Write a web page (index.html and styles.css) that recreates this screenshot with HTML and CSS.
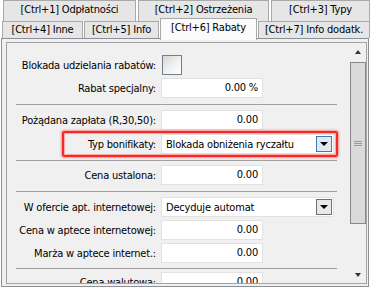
FILE: index.html
```html
<!DOCTYPE html>
<html lang="pl">
<head>
<meta charset="utf-8">
<title>Rabaty</title>
<link rel="stylesheet" href="styles.css">
</head>
<body>
<div class="tabctl">
  <div class="tabrow back">
    <div class="tab t1">[Ctrl+1] Odpłatności</div>
    <div class="tab t2">[Ctrl+2] Ostrzeżenia</div>
    <div class="tab t3">[Ctrl+3] Typy</div>
  </div>
  <div class="tabrow front">
    <div class="tab t4">[Ctrl+4] Inne</div>
    <div class="tab t5">[Ctrl+5] Info</div>
    <div class="tab t6 active">[Ctrl+6] Rabaty</div>
    <div class="tab t7">[Ctrl+7] Info dodatk.</div>
  </div>
  <div class="page">
    <div class="scrollbox">
      <div class="form">
        <div class="row">
          <div class="lbl">Blokada udzielania rabatów:</div>
          <div class="check"></div>
        </div>
        <div class="row">
          <div class="lbl">Rabat specjalny:</div>
          <div class="inp">0.00 %</div>
        </div>
        <div class="sep s1"></div>
        <div class="row">
          <div class="lbl">Pożądana zapłata (R,30,50):</div>
          <div class="inp">0.00</div>
        </div>
        <div class="row hl">
          <div class="lbl">Typ bonifikaty:</div>
          <div class="sel">
            <span class="seltext">Blokada obniżenia ryczałtu</span>
            <span class="dd focus"><span class="tri-down"></span></span>
          </div>
        </div>
        <div class="sep s2"></div>
        <div class="row">
          <div class="lbl">Cena ustalona:</div>
          <div class="inp">0.00</div>
        </div>
        <div class="sep s3"></div>
        <div class="row">
          <div class="lbl">W ofercie apt. internetowej:</div>
          <div class="sel">
            <span class="seltext">Decyduje automat</span>
            <span class="dd"><span class="tri-down"></span></span>
          </div>
        </div>
        <div class="row">
          <div class="lbl">Cena w aptece internetowej:</div>
          <div class="inp">0.00</div>
        </div>
        <div class="row">
          <div class="lbl">Marża w aptece internet.:</div>
          <div class="inp">0.00</div>
        </div>
        <div class="sep s4"></div>
        <div class="row">
          <div class="lbl">Cena walutowa:</div>
          <div class="inp">0.00</div>
        </div>
      </div>
      <div class="vscroll">
        <div class="sbtn"><span class="tri-up small"></span></div>
        <div class="track">
          <div class="thumb"><span class="grip"></span></div>
        </div>
        <div class="sbtn"><span class="tri-down small"></span></div>
      </div>
    </div>
  </div>
</div>
</body>
</html>
```

FILE: styles.css
```css
* { box-sizing: border-box; }

body {
  margin: 0;
  background: #ffffff;
  font-family: "DejaVu Sans Condensed", "DejaVu Sans", sans-serif;
  font-stretch: condensed;
  font-size: 11px;
  letter-spacing: -0.2px;
  color: #000;
}

.tabctl {
  width: 371px;
  height: 289px;
  overflow: hidden;
}

.tabrow {
  display: flex;
  align-items: flex-end;
}

.tab {
  border: 1px solid #a9a9a9;
  border-bottom: none;
  background: #e6e6e6;
  text-align: center;
  white-space: nowrap;
}

.back {
  height: 21px;
  padding-left: 3px;
}
.back .tab {
  height: 21px;
  line-height: 18px;
}
.t1 { width: 133px; }
.t2 { width: 131px; margin-left: 2px; }
.t3 { width: 99px; margin-left: 2px; }

.front {
  height: 17px;
  padding-left: 2px;
}
.front .tab {
  height: 17px;
  line-height: 16px;
}
.t4 { width: 81px; }
.t5 { width: 75px; margin-left: 1px; }
.t6 { width: 97px; margin-left: 1px; }
.t7 { width: 112px; margin-left: 1px; }

.front .tab.active {
  height: 22px;
  margin-top: -3px;
  margin-bottom: -2px;
  background: #fbfbfb;
  position: relative;
  z-index: 2;
  line-height: 18px;
}

.page {
  margin-left: 1px;
  width: 368px;
  height: 249px;
  border: 1px solid #8c8f96;
  background: #f0f0f0;
  padding: 3px 1px 2px 4px;
}

.scrollbox {
  height: 100%;
  border: 1px solid #a3a3a3;
  background: #f0f0f0;
  display: flex;
  overflow: hidden;
}

.form {
  width: 342px;
  flex: none;
  display: flex;
  flex-direction: column;
  gap: 3px;
  padding-top: 12px;
}

.row {
  display: flex;
  align-items: center;
  height: 20px;
  flex: none;
  gap: 5px;
  position: relative;
}

.lbl {
  width: 149px;
  text-align: right;
  white-space: nowrap;
}

.check {
  width: 20px;
  height: 20px;
  margin-left: 1px;
  border: 1px solid #6e7f91;
  background: linear-gradient(135deg, #d6d6d6 0%, #f4f4f4 60%, #ffffff 100%);
}

.inp {
  width: 102px;
  height: 20px;
  background: #fff;
  border: 1px solid #e2e2e2;
  text-align: right;
  padding-right: 4px;
  line-height: 18px;
}

.sel {
  width: 173px;
  height: 20px;
  background: #fff;
  border: 1px solid #e2e2e2;
  display: flex;
  align-items: center;
  justify-content: space-between;
  padding-left: 4px;
  padding-right: 1px;
}

.dd {
  width: 16px;
  height: 16px;
  border: 1px solid #6f6f6f;
  background: #e9e9e9;
  display: flex;
  align-items: center;
  justify-content: center;
}
.dd.focus {
  border-color: #3d7bb3;
  background: #dfe9f3;
}

.tri-down {
  width: 0;
  height: 0;
  border-left: 4px solid transparent;
  border-right: 4px solid transparent;
  border-top: 4px solid #000;
}
.tri-up {
  width: 0;
  height: 0;
  border-left: 4px solid transparent;
  border-right: 4px solid transparent;
  border-bottom: 4px solid #000;
}
.tri-up.small, .tri-down.small {
  border-left-width: 3px;
  border-right-width: 3px;
}
.tri-up.small { border-bottom-color: #333; }
.tri-down.small { border-top-color: #333; }

.hl { margin-top: 1px; }
.hl::before {
  content: "";
  position: absolute;
  left: 55px;
  right: 11px;
  top: -3px;
  bottom: -3px;
  border: 2px solid #f42a2a;
  border-radius: 2px;
  box-shadow: 0 0 2px 1px rgba(255, 70, 70, 0.55), inset 0 0 1px 1px rgba(255, 90, 90, 0.5);
  pointer-events: none;
}

.sep {
  height: 1px;
  flex: none;
  width: 321px;
  margin-left: 9px;
  background: #a0a0a0;
}
.s1 { margin-top: 3px; margin-bottom: 2px; }
.s2 { margin-top: 3px; margin-bottom: 1px; }
.s3 { margin-top: 3px; margin-bottom: 2px; }
.s4 { margin-top: 2px; margin-bottom: 0; }

.vscroll {
  width: 17px;
  flex: none;
  display: flex;
  flex-direction: column;
  background: #f0f0f0;
}

.sbtn {
  height: 17px;
  flex: none;
  display: flex;
  align-items: center;
  justify-content: center;
  padding-left: 1px;
}

.track {
  flex: 1;
  padding: 2px 0 0 1px;
}

.thumb {
  height: 162px;
  border: 1px solid #8a8a8a;
  background: #dadada;
  display: flex;
  align-items: center;
  justify-content: center;
}

.grip {
  width: 8px;
  height: 5px;
  border-top: 1px solid #9a9a9a;
  border-bottom: 1px solid #9a9a9a;
  background: linear-gradient(#9a9a9a, #9a9a9a) center / 100% 1px no-repeat;
}
```
